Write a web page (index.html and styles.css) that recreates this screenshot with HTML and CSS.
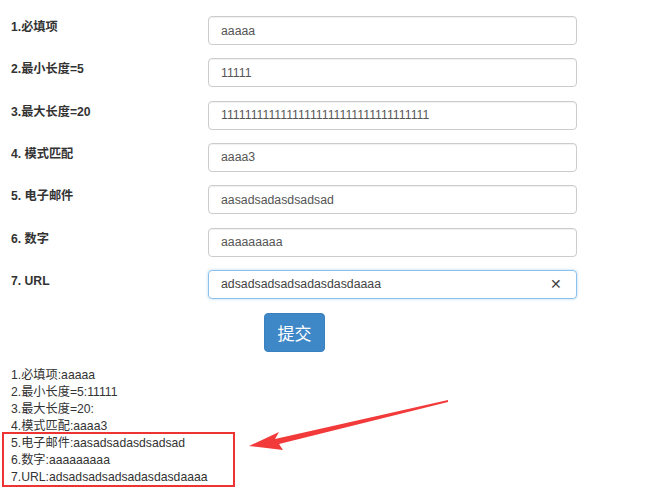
FILE: index.html
```html
<!DOCTYPE html>
<html lang="zh-CN">
<head>
<meta charset="utf-8">
<title>表单验证</title>
<link rel="stylesheet" href="styles.css">
</head>
<body>
<div class="page">
  <form class="form">
    <div class="row"><label class="label">1.必填项</label><div class="field"><span class="input">aaaaa</span></div></div>
    <div class="row"><label class="label">2.最小长度=5</label><div class="field"><span class="input">11111</span></div></div>
    <div class="row"><label class="label">3.最大长度=20</label><div class="field"><span class="input">11111111111111111111111111111111111</span></div></div>
    <div class="row"><label class="label">4. 模式匹配</label><div class="field"><span class="input">aaaa3</span></div></div>
    <div class="row"><label class="label">5. 电子邮件</label><div class="field"><span class="input">aasadsadasdsadsad</span></div></div>
    <div class="row"><label class="label">6. 数字</label><div class="field"><span class="input">aaaaaaaaa</span></div></div>
    <div class="row"><label class="label">7. URL</label><div class="field"><span class="input input-focus">adsadsadsadsadasdasdaaaa<span class="clear">&#x2715;</span></span></div></div>
    <div class="actions"><button type="button" class="btn">提交</button></div>
  </form>
  <div class="output">
    <div>1.必填项:aaaaa</div>
    <div>2.最小长度=5:11111</div>
    <div>3.最大长度=20:</div>
    <div>4.模式匹配:aaaa3</div>
    <div>5.电子邮件:aasadsadasdsadsad</div>
    <div>6.数字:aaaaaaaaa</div>
    <div>7.URL:adsadsadsadsadasdasdaaaa</div>
  </div>
  <div class="mark-box"></div>
  <svg class="mark-arrow" width="200" height="60" viewBox="0 0 200 60">
    <polygon points="199,1 26,40 30,33 0,47 34,51 30,45 199,3" fill="#f23a3a"/>
  </svg>
</div>
</body>
</html>
```
FILE: styles.css
```css
html, body {
  margin: 0;
  padding: 0;
  background: #fff;
}
body {
  font-family: "Liberation Sans", Arial, "Noto Sans CJK SC", sans-serif;
  color: #333;
}
.page {
  position: relative;
  width: 650px;
  height: 491px;
  padding: 16px 0 0 11px;
  box-sizing: border-box;
}
.form {
  display: flex;
  flex-direction: column;
  margin: 0;
}
.row {
  display: flex;
  height: 42.33px;
}
.label {
  width: 197px;
  font-size: 12.2px;
  font-weight: bold;
  line-height: 20px;
  padding-top: 1px;
  color: #333;
}
.field {
  width: 369px;
}
.input {
  display: flex;
  align-items: center;
  box-sizing: border-box;
  height: 29px;
  padding: 0 12px;
  border: 1px solid #ccc;
  border-radius: 4px;
  font-size: 12.3px;
  color: #555;
  box-shadow: inset 0 1px 1px rgba(0,0,0,0.06);
}
.input-focus {
  border-color: #8dc0ea;
  box-shadow: 0 0 3px rgba(102,175,233,0.5);
  justify-content: space-between;
  color: #444;
}
.clear {
  font-size: 14px;
  color: #444;
  margin-right: 2px;
}
.actions {
  display: flex;
  padding-left: 253px;
  margin-top: 0.7px;
}
.btn {
  width: 61px;
  height: 39px;
  border: 1px solid #3a80bf;
  border-radius: 4px;
  background: #3f88c8;
  color: #fff;
  font-family: "Noto Sans CJK SC", sans-serif;
  font-size: 17px;
  padding: 0;
}
.output {
  margin-top: 15px;
  font-size: 12.2px;
  line-height: 17px;
  color: #333;
}
.mark-box {
  position: absolute;
  left: 2px;
  top: 432px;
  width: 229px;
  height: 51px;
  border: 2px solid #ee3333;
}
.mark-arrow {
  position: absolute;
  left: 249px;
  top: 399px;
}
```
